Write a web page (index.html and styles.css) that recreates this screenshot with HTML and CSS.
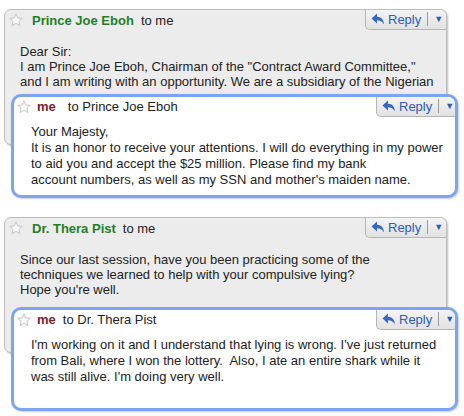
FILE: index.html
```html
<!DOCTYPE html>
<html lang="en">
<head>
    <meta charset="UTF-8">
    <title>Conversation</title>
    <link rel="stylesheet" href="styles.css">
</head>
<body>
    <div class="thread">
        <div class="msg">
            <div class="msg-head">
                <svg class="star" viewBox="0 0 14 14"><path d="M7 0.8 L8.8 5 L13.3 5.3 L9.9 8.2 L11 12.7 L7 10.3 L3 12.7 L4.1 8.2 L0.7 5.3 L5.2 5 Z"/></svg>
                <span class="sender">Prince Joe Eboh</span>
                <span class="to">to me</span>
                <div class="reply-btn">
                    <svg class="arrow" viewBox="0 0 14 12"><path d="M6 0.5 L0.5 5.5 L6 10.5 V7.3 C9 7.3 11.2 8.4 13 11.5 C12.6 6.8 10.2 3.8 6 3.8 Z"/></svg>
                    <span class="reply-label">Reply</span>
                    <span class="sep"></span>
                    <span class="more">&#9660;</span>
                </div>
            </div>
            <div class="msg-body">
                Dear Sir:<br>
                I am Prince Joe Eboh, Chairman of the "Contract Award Committee,"<br>
                and I am writing with an opportunity. We are a subsidiary of the Nigerian
            </div>
        </div>
        <div class="msg msg-reply">
            <div class="msg-head">
                <svg class="star" viewBox="0 0 14 14"><path d="M7 0.8 L8.8 5 L13.3 5.3 L9.9 8.2 L11 12.7 L7 10.3 L3 12.7 L4.1 8.2 L0.7 5.3 L5.2 5 Z"/></svg>
                <span class="sender me">me</span>
                <span class="to wide">to Prince Joe Eboh</span>
                <div class="reply-btn">
                    <svg class="arrow" viewBox="0 0 14 12"><path d="M6 0.5 L0.5 5.5 L6 10.5 V7.3 C9 7.3 11.2 8.4 13 11.5 C12.6 6.8 10.2 3.8 6 3.8 Z"/></svg>
                    <span class="reply-label">Reply</span>
                    <span class="sep"></span>
                    <span class="more">&#9660;</span>
                </div>
            </div>
            <div class="msg-body">
                Your Majesty,<br>
                It is an honor to receive your attentions. I will do everything in my power<br>
                to aid you and accept the $25 million. Please find my bank<br>
                account numbers, as well as my SSN and mother's maiden name.
            </div>
        </div>
    </div>

    <div class="thread thread-second">
        <div class="msg">
            <div class="msg-head">
                <svg class="star" viewBox="0 0 14 14"><path d="M7 0.8 L8.8 5 L13.3 5.3 L9.9 8.2 L11 12.7 L7 10.3 L3 12.7 L4.1 8.2 L0.7 5.3 L5.2 5 Z"/></svg>
                <span class="sender">Dr. Thera Pist</span>
                <span class="to">to me</span>
                <div class="reply-btn">
                    <svg class="arrow" viewBox="0 0 14 12"><path d="M6 0.5 L0.5 5.5 L6 10.5 V7.3 C9 7.3 11.2 8.4 13 11.5 C12.6 6.8 10.2 3.8 6 3.8 Z"/></svg>
                    <span class="reply-label">Reply</span>
                    <span class="sep"></span>
                    <span class="more">&#9660;</span>
                </div>
            </div>
            <div class="msg-body">
                Since our last session, have you been practicing some of the<br>
                techniques we learned to help with your compulsive lying?<br>
                Hope you're well.
            </div>
        </div>
        <div class="msg msg-reply">
            <div class="msg-head">
                <svg class="star" viewBox="0 0 14 14"><path d="M7 0.8 L8.8 5 L13.3 5.3 L9.9 8.2 L11 12.7 L7 10.3 L3 12.7 L4.1 8.2 L0.7 5.3 L5.2 5 Z"/></svg>
                <span class="sender me">me</span>
                <span class="to">to Dr. Thera Pist</span>
                <div class="reply-btn">
                    <svg class="arrow" viewBox="0 0 14 12"><path d="M6 0.5 L0.5 5.5 L6 10.5 V7.3 C9 7.3 11.2 8.4 13 11.5 C12.6 6.8 10.2 3.8 6 3.8 Z"/></svg>
                    <span class="reply-label">Reply</span>
                    <span class="sep"></span>
                    <span class="more">&#9660;</span>
                </div>
            </div>
            <div class="msg-body">
                I'm working on it and I understand that lying is wrong. I've just returned<br>
                from Bali, where I won the lottery.&nbsp; Also, I ate an entire shark while it<br>
                was still alive. I'm doing very well.
            </div>
        </div>
    </div>
</body>
</html>
```

FILE: styles.css
```css
body {
    margin: 0;
    padding: 9px 0 0 4px;
    background: #ffffff;
    font-family: "Liberation Sans", Arial, sans-serif;
    font-size: 13px;
    color: #222222;
}

.thread {
    margin-bottom: 19px;
}

.msg {
    box-sizing: border-box;
    width: 443px;
    height: 136px;
    background-color: #ececec;
    border: 1px solid #bdbdbd;
    border-radius: 7px;
    box-shadow: 1px 1px 2px rgba(0, 0, 0, 0.25);
    overflow: hidden;
}

.msg-head {
    display: flex;
    align-items: center;
    height: 20px;
}

.star {
    width: 14px;
    height: 14px;
    margin: 0 0 0 4px;
    fill: #fafafa;
    stroke: #c4c4c4;
    stroke-width: 1;
}

.sender {
    font-weight: bold;
    color: #1f7f27;
    margin-left: 9px;
}

.sender.me {
    color: #7b1d2c;
    margin-left: 6px;
}

.to {
    margin-left: 7px;
}

.to.wide {
    margin-left: 12px;
}

.reply-btn {
    margin-left: auto;
    display: flex;
    align-items: center;
    box-sizing: border-box;
    width: 81px;
    height: 21px;
    margin-top: -1px;
    padding-left: 5px;
    border-left: 1px solid #b5b5b5;
    border-bottom: 1px solid #b5b5b5;
    border-bottom-left-radius: 5px;
    background: linear-gradient(#f4f4f4, #e2e2e2);
    color: #2c5cb5;
}

.arrow {
    width: 14px;
    height: 12px;
    fill: #3567c4;
}

.reply-label {
    margin-left: 3px;
}

.sep {
    width: 1px;
    height: 14px;
    background-color: #9a9a9a;
    margin-left: 6px;
}

.more {
    font-size: 9px;
    margin-left: 6px;
    color: #2c5cb5;
}

.msg-body {
    padding: 14px 15px 0;
    line-height: 15px;
    white-space: nowrap;
}

.msg-reply {
    position: relative;
    width: 447px;
    height: 104px;
    margin: -51px 0 0 7px;
    background-color: #ffffff;
    border: 3px solid #7aa6f0;
    border-radius: 10px;
    box-shadow: 1px 1px 2px rgba(0, 0, 0, 0.2);
}

.thread-second .msg-reply {
    margin-top: -46px;
}

.msg-reply .star {
    margin-left: 3px;
}

.msg-reply .msg-head {
    height: 19px;
}

.msg-reply .reply-btn {
    width: 79px;
    height: 20px;
    margin-top: 0;
}

.msg-reply .msg-body {
    padding: 8px 17px 0;
    line-height: 16px;
}
```
